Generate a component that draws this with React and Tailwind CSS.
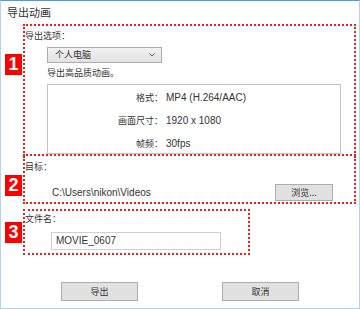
const cjk = "text-[9px] leading-[12px]";
const latin = "text-[10px] leading-[12px] font-['Liberation_Sans','Noto_Sans_CJK_SC',sans-serif]";

const Badge = ({ n, top }) => (
  <div
    className={`w-[17px] h-[21px] shrink-0 bg-[#ff0000] text-white text-center font-bold text-[18px] leading-[21px] font-['Liberation_Sans',sans-serif] ${top}`}
  >
    {n}
  </div>
);

const WinButton = ({ children, className = "" }) => (
  <div
    className={`h-[19px] w-[77px] flex items-center justify-center border border-[#adadad] bg-[#e1e1e1] ${cjk} ${className}`}
  >
    {children}
  </div>
);

const InfoRow = ({ label, value }) => (
  <div className="flex items-center h-[23px]">
    <div className={`w-[115px] text-right ${cjk}`}>{label}</div>
    <div className={`ml-[3px] ${latin}`}>{value}</div>
  </div>
);

export default function App() {
  return (
    <div className="w-[360px] h-[309px] bg-white text-[#333] border-t border-t-[#4f9de0] border-x border-b border-x-[#b3d3ef] border-b-[#b3d3ef] font-['Noto_Sans_CJK_SC',sans-serif] overflow-hidden">
      {/* 标题 */}
      <div className="pl-[6px] pt-[4px] text-[11px] leading-[14px]">导出动画</div>

      {/* 1 导出选项 */}
      <div className="flex mt-[5px] pl-[4px]">
        <Badge n="1" top="mt-[30px]" />
        <div className="ml-[1px] w-[333px] h-[132px] border-2 border-dotted border-[#ff1a1a]">
          <div className={`pt-[4px] ${cjk}`}>导出选项：</div>
          <div className="ml-[22px] mt-[5px] w-[115px] h-[16px] flex items-center justify-between pl-[7px] pr-[6px] border border-[#acacac] bg-gradient-to-b from-[#f2f2f2] to-[#e3e3e3]">
            <span className={cjk}>个人电脑</span>
            <svg width="6" height="4" viewBox="0 0 6 4">
              <path d="M0.5 0.5 L3 3 L5.5 0.5" fill="none" stroke="#777" strokeWidth="1" />
            </svg>
          </div>
          <div className={`ml-[22px] mt-[4px] ${cjk}`}>导出高品质动画。</div>
          <div className="ml-[22px] mt-[5px] w-[294px] h-[70px] pt-[1px] border border-[#c3c3c3]">
            <InfoRow label="格式：" value="MP4 (H.264/AAC)" />
            <InfoRow label="画面尺寸：" value="1920 x 1080" />
            <InfoRow label="帧频：" value="30fps" />
          </div>
        </div>
      </div>

      {/* 2 目标 */}
      <div className="flex pl-[4px]">
        <Badge n="2" top="mt-[19px]" />
        <div className="ml-[1px] w-[333px] h-[48px] border-2 border-t-0 border-dotted border-[#ff1a1a]">
          <div className={`pt-[5px] ${cjk}`}>目标：</div>
          <div className="mt-[11px] h-[17px] flex items-center justify-between pl-[27px] pr-[21px]">
            <span className={latin}>C:\Users\nikon\Videos</span>
            <div className={`h-[17px] w-[58px] flex items-center justify-center border border-[#adadad] bg-[#e1e1e1] ${cjk}`}>
              浏览...
            </div>
          </div>
        </div>
      </div>

      {/* 3 文件名 */}
      <div className="flex mt-[5px] pl-[4px]">
        <Badge n="3" top="mt-[13px]" />
        <div className="ml-[1px] w-[227px] h-[46px] border-2 border-dotted border-[#ff1a1a]">
          <div className={`pt-[2px] ${cjk}`}>文件名：</div>
          <div className="ml-[26px] mt-[7px] w-[170px] h-[18px] flex items-center pl-[4px] border border-[#cfcfcf]">
            <span className={latin}>MOVIE_0607</span>
          </div>
        </div>
      </div>

      {/* 按钮 */}
      <div className="flex mt-[27px] pl-[60px] gap-[84px]">
        <WinButton>导出</WinButton>
        <WinButton>取消</WinButton>
      </div>
    </div>
  );
}
